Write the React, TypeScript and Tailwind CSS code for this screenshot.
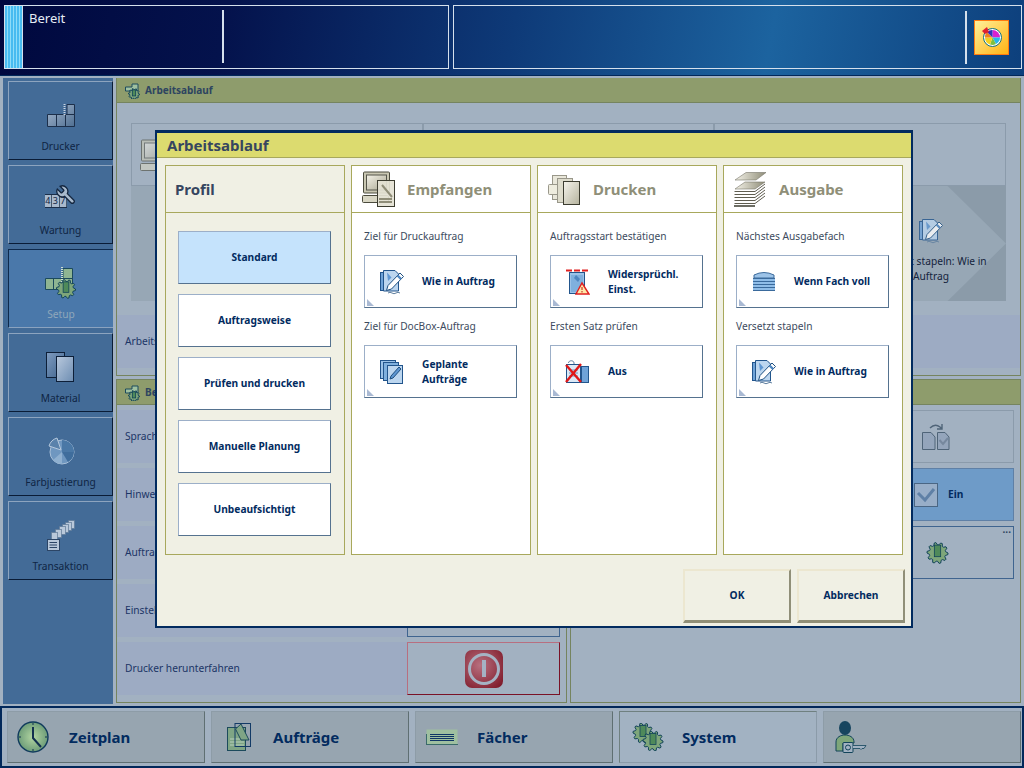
import React from 'react';

// regular text is set in Noto Sans, bold text in DejaVu Sans Bold (closest to the wide bold in the picture)
const bold = "font-['DejaVu_Sans',sans-serif] font-bold";

// gear outline, teeth around a centre
const gearPath = (cx: number, cy: number, r: number, teeth = 10) => {
  const pts: string[] = [];
  for (let i = 0; i < teeth * 4; i++) {
    const a = (i / (teeth * 4)) * Math.PI * 2;
    const rr = i % 4 < 2 ? r : r * 0.78;
    pts.push(`${(cx + Math.cos(a) * rr).toFixed(1)},${(cy + Math.sin(a) * rr).toFixed(1)}`);
  }
  return `M${pts.join('L')}Z`;
};

const Gear = ({ cx, cy, r }: { cx: number; cy: number; r: number }) => (
  <g>
    <path d={gearPath(cx, cy, r)} fill="#7ea67a" stroke="#12445a" strokeWidth="1" />
    <rect x={cx - r * 0.3} y={cy - r * 0.75} width={r * 0.6} height={r * 1.1} fill="#4f8a5a" stroke="#12445a" strokeWidth="0.8" />
  </g>
);

const DruckerIcon = () => (
  <svg width="28" height="23" viewBox="0 0 28 23">
    <defs>
      <linearGradient id="dr" x1="0" y1="0" x2="1" y2="1"><stop offset="0" stopColor="#a9bad0" /><stop offset="1" stopColor="#4f6f92" /></linearGradient>
    </defs>
    <path d="M0.5 10.5H27.5V22.5H0.5ZM20 0.5H27.5V10.5H20Z" fill="url(#dr)" stroke="#1c2f4a" />
    <path d="M9.5 11V22M18.5 11V22M20 10.5H27" stroke="#1c2f4a" />
    <path d="M17.5 0V11" stroke="#c8d4e2" strokeWidth="2" strokeDasharray="1 1" />
  </svg>
);

const WartungIcon = () => (
  <div className="relative w-[32px] h-[24px] -mt-[6px]">
    <div className="absolute left-0 bottom-0 flex border-y border-[#1c2f4a] bg-[#a9b9cc]">
      {['4', '3', '7'].map(n => (
        <span key={n} className="w-[7.5px] h-[12px] text-[9px] leading-[12px] text-center text-[#0f2544] border-r border-[#44586f]">{n}</span>
      ))}
    </div>
    <svg className="absolute left-[10px] top-0" width="22" height="22" viewBox="0 0 24 24">
      <path
        transform="translate(24 0) scale(-1 1)"
        d="M14.7 6.3a1 1 0 0 0 0 1.4l1.6 1.6a1 1 0 0 0 1.4 0l3.77-3.77a6 6 0 0 1-7.94 7.94l-6.91 6.91a2.12 2.12 0 0 1-3-3l6.91-6.91a6 6 0 0 1 7.94-7.94l-3.76 3.76z"
        fill="#a9bacd"
        stroke="#14263f"
        strokeWidth="1.4"
      />
    </svg>
  </div>
);

const SetupIcon = () => (
  <svg width="32" height="32" viewBox="0 0 32 32">
    <path d="M0.5 11.5H27.5V22.5H0.5ZM18 1.5H27.5V11.5H18Z" fill="#8fb592" stroke="#1c4a5c" />
    <path d="M8.5 12V22M17 12V22" stroke="#1c4a5c" />
    <path d="M17 0V18" stroke="#cfe0d0" strokeWidth="2" strokeDasharray="1 1" />
    <Gear cx={21} cy={22} r={9.5} />
  </svg>
);

const MaterialIcon = () => (
  <svg width="29" height="30" viewBox="0 0 29 30">
    <defs>
      <linearGradient id="mt1" x1="0" y1="0" x2="1" y2="1"><stop offset="0" stopColor="#7f9cc0" /><stop offset="1" stopColor="#3e628c" /></linearGradient>
      <linearGradient id="mt2" x1="0" y1="0" x2="1" y2="1"><stop offset="0" stopColor="#b9c9dd" /><stop offset="1" stopColor="#6d8db2" /></linearGradient>
    </defs>
    <rect x="0.5" y="0.5" width="18" height="25" fill="url(#mt1)" stroke="#0d1f38" />
    <rect x="10.5" y="4.5" width="17" height="25" fill="url(#mt2)" stroke="#0d1f38" />
  </svg>
);

const FarbIcon = () => (
  <svg width="28" height="28" viewBox="0 0 28 28">
    <circle cx="15" cy="15" r="12" fill="#6f97c0" stroke="#a9c0d8" />
    <path d="M15 15L27 15A12 12 0 0 1 21 25Z" fill="#3f6d9c" />
    <path d="M15 15L15 3A12 12 0 0 1 27 15Z" fill="#4a78a6" />
    <path d="M15 15L6 23A12 12 0 0 0 15 27Z" fill="#8fb0d0" />
    <path d="M14 13L2 9A12 12 0 0 1 10 1Z" fill="#5a82ab" stroke="#b5c8dc" />
  </svg>
);

const TransaktionIcon = () => (
  <svg width="28" height="31" viewBox="0 0 28 31">
    {[[21, 0], [18, 2], [15, 4], [12, 6], [8, 9], [4, 12]].map(([x, y]) => (
      <rect key={x} x={x + 0.5} y={y + 0.5} width="6" height="8" fill="#b9c8da" stroke="#5e7896" strokeWidth="0.7" />
    ))}
    <rect x="0.5" y="19.5" width="12" height="11" fill="#b9c8da" stroke="#2c4566" />
    <path d="M2.5 22.5H10M2.5 25H10M2.5 27.5H10" stroke="#2c4566" />
  </svg>
);

const ClockIcon = () => (
  <svg width="34" height="34" viewBox="0 0 34 34">
    <defs>
      <radialGradient id="clk"><stop offset="0" stopColor="#b3d6a2" /><stop offset="1" stopColor="#6d9c78" /></radialGradient>
    </defs>
    <circle cx="17" cy="17" r="15" fill="url(#clk)" stroke="#0f3a5c" strokeWidth="1.4" />
    <path d="M17 7L17 18L25 27" fill="none" stroke="#12304f" strokeWidth="2" />
    <path d="M17 3V5M17 29V31M3 17H5M29 17H31" stroke="#12304f" />
  </svg>
);

const AuftraegeIcon = () => (
  <svg width="24" height="28" viewBox="0 0 24 28">
    <rect x="0.5" y="4.5" width="18" height="23" fill="#7fa585" stroke="#1c4a5c" />
    <path d="M3 16H17M3 19H17M3 22H17" stroke="#b9d0bc" />
    <rect x="8" y="0.5" width="15.5" height="23" fill="none" stroke="#123a66" />
    <path d="M8.5 6L14 1L22 17H14Z" fill="#7fa585" stroke="#1c4a5c" />
  </svg>
);

const FaecherIcon = () => (
  <svg width="32" height="16" viewBox="0 0 32 16">
    <rect x="0.5" y="0.5" width="31" height="15" fill="#9fc0a0" />
    <path d="M0 15.5H32M0.5 5V15" stroke="#3a6a6a" />
    <path d="M4 5.5H28M4 7.5H28M4 9.5H28M4 11.5H28" stroke="#0f3566" />
  </svg>
);

const GearsIcon = () => (
  <svg width="33" height="28" viewBox="0 0 33 28">
    <Gear cx={11} cy={10} r={10} />
    <Gear cx={21} cy={18} r={10} />
  </svg>
);

const UserKeyIcon = () => (
  <svg width="32" height="33" viewBox="0 0 32 33">
    <ellipse cx="10" cy="7" rx="6" ry="7" fill="#17455f" />
    <path d="M1 30V21C1 16 6 14 10 14C14 14 19 16 19 21V22H8V30Z" fill="#7ea67a" stroke="#12445a" />
    <rect x="8" y="21.5" width="10" height="10" rx="1" fill="#a2b2c2" stroke="#12445a" />
    <circle cx="13" cy="26.5" r="2.5" fill="none" stroke="#12445a" />
    <path d="M18 24.5H31L29 27.5H27L26 28.5L25 27.5H18" fill="#a2b2c2" stroke="#12445a" strokeWidth="0.8" />
  </svg>
);

const DocPencil = () => (
  <svg width="24" height="26" viewBox="0 0 24 26">
    <rect x="0.5" y="3.5" width="14" height="18" fill="#6fa3d8" stroke="#22558c" />
    <path d="M3.5 1.5H15L18.5 5V22H3.5Z" fill="#bcd6ef" stroke="#22558c" />
    <path d="M7 3.5L11.5 8.5L8 12Z" fill="#5f97d2" />
    <path d="M20 4L23.5 7.5L11.5 20L6.5 21.5L8 16.5Z" fill="#fff" stroke="#1d4f80" />
    <path d="M17.5 6.5L21 10" stroke="#4f86c0" strokeWidth="2.4" />
    <path d="M8 24Q10 22.5 12 24T16 24T20 24" fill="none" stroke="#5f7f9f" />
  </svg>
);

const DocsPencil = () => (
  <svg width="24" height="24" viewBox="0 0 24 24">
    <rect x="0.5" y="0.5" width="15" height="18" fill="#9cc3e8" stroke="#22558c" />
    <rect x="3.5" y="2.5" width="15" height="18" fill="#7fb0de" stroke="#22558c" />
    <rect x="7.5" y="5.5" width="15" height="18" fill="#bcd6ef" stroke="#22558c" />
    <path d="M19 7L21 9L13 18L10 19L11 16Z" fill="#5f97d2" stroke="#1d4f80" />
  </svg>
);

const WarnDoc = () => (
  <svg width="24" height="26" viewBox="0 0 24 26">
    <path d="M0 1.5H22" stroke="#e02020" strokeWidth="2" strokeDasharray="6 2" />
    <rect x="3.5" y="3.5" width="15" height="21" fill="#9cc3e8" stroke="#22558c" />
    <path d="M5 6H17V13L10 23H5Z" fill="#7fb0de" />
    <path d="M10 6L14 10L12 13L8 9Z" fill="#4f86c0" />
    <path d="M16 14L23 25H10Z" fill="#ffe9a8" stroke="#e02020" strokeWidth="1.4" />
    <path d="M16 18V21M16 22V23.5" stroke="#c01010" />
  </svg>
);

const NoProof = () => (
  <svg width="25" height="24" viewBox="0 0 25 24">
    <path d="M3.5 3C3.5 0 9 0 9 3V5" fill="none" stroke="#5f7f9f" />
    <rect x="1.5" y="4.5" width="14" height="18" fill="#dce9f6" stroke="#22558c" />
    <rect x="16.5" y="6.5" width="7" height="16" fill="#6fa3d8" stroke="#22558c" />
    <path d="M4 10H13M4 13H13M4 16H13" stroke="#6f97c0" />
    <path d="M1 22L16 4M1 5L16 22" stroke="#e01818" strokeWidth="2.4" />
  </svg>
);

const TrayIcon = () => (
  <svg width="24" height="21" viewBox="0 0 24 21">
    <path d="M2 4Q12 -1 22 4V7H2Z" fill="#9cc3e8" stroke="#3a6a9c" />
    <path d="M1 7.5H23M1 10.5H23M1 13.5H23M1 16.5H23M1 19.5H23" stroke="#3a6a9c" />
    <path d="M1 9H23M1 12H23M1 15H23M1 18H23" stroke="#8fbde8" strokeWidth="2" />
  </svg>
);

const EmpfangenIcon = () => (
  <svg width="34" height="37" viewBox="0 0 34 37">
    <defs>
      <linearGradient id="emp" x1="0" y1="0" x2="1" y2="1"><stop offset="0" stopColor="#f4f2e8" /><stop offset="1" stopColor="#a8a690" /></linearGradient>
    </defs>
    <rect x="1.5" y="1" width="26" height="21" rx="1" fill="#c9c7b2" stroke="#4a4a3c" />
    <rect x="4.5" y="4" width="20" height="15" fill="url(#emp)" stroke="#55554a" />
    <rect x="0.5" y="24.5" width="26" height="7" rx="1" fill="#d8d6c4" stroke="#4a4a3c" />
    <rect x="15.5" y="9.5" width="17" height="26" fill="#e4e2d4" fillOpacity="0.92" stroke="#3c3c30" />
    <path d="M20 14L30 26M17 28H30M17 31H30" stroke="#8f8d78" strokeWidth="2" />
  </svg>
);

const DruckenIcon = () => (
  <svg width="32" height="31" viewBox="0 0 32 31">
    <defs>
      <linearGradient id="dru" x1="0" y1="0" x2="1" y2="1"><stop offset="0" stopColor="#f6f4ec" /><stop offset="1" stopColor="#b5b39e" /></linearGradient>
    </defs>
    <rect x="4.5" y="1.5" width="14" height="24" fill="#e9e7da" stroke="#99978a" />
    <rect x="0.5" y="10.5" width="17" height="10" rx="1" fill="#eeecde" stroke="#99978a" />
    <rect x="9.5" y="4.5" width="15" height="24" fill="#dedccc" stroke="#99978a" />
    <rect x="15.5" y="7.5" width="16" height="23" fill="url(#dru)" stroke="#3c3c30" />
  </svg>
);

const AusgabeIcon = () => (
  <svg width="32" height="35" viewBox="0 0 32 35">
    <defs>
      <linearGradient id="aus" x1="0" y1="0" x2="1" y2="0"><stop offset="0" stopColor="#f4f2e8" /><stop offset="1" stopColor="#8f8d78" /></linearGradient>
    </defs>
    <path d="M1 8L12 0.5H32L22 8Z" fill="url(#aus)" stroke="#77756a" strokeWidth="0.6" />
    <path d="M1 17L11 10H31L21 17Z" fill="url(#aus)" stroke="#77756a" strokeWidth="0.6" />
    <path d="M0.5 19.5H21L31 12M0.5 22.5H21L31 15M0.5 25.5H21L31 18M0.5 28.5H21L31 21M0.5 31.5H21L31 24" fill="none" stroke="#5f5d50" />
    <path d="M0 34H21" stroke="#3c3c30" strokeWidth="1.5" />
  </svg>
);

const TwoDocsIcon = () => (
  <svg width="30" height="27" viewBox="0 0 30 27">
    <path d="M8 5Q13 0 18 4L20 6M20 1V6H15" fill="none" stroke="#4f6478" strokeWidth="1.4" />
    <path d="M0.5 9.5H9L13 14V26.5H0.5Z" fill="#94a5bb" stroke="#4f6478" />
    <path d="M15.5 9.5H23L27 14V26.5H15.5Z" fill="#94a5bb" stroke="#4f6478" />
    <path d="M17.5 17L21 21L26 15" fill="none" stroke="#76889e" strokeWidth="2" />
  </svg>
);

const CheckBox = () => (
  <svg width="24" height="24" viewBox="0 0 24 24">
    <rect x="0.5" y="0.5" width="23" height="23" fill="#98aec8" stroke="#4a6684" />
    <path d="M4 10L11 17L20 6" fill="none" stroke="#5f80a6" strokeWidth="3" />
  </svg>
);

const PowerIcon = () => (
  <svg width="38" height="38" viewBox="0 0 38 38">
    <defs>
      <radialGradient id="pw" cx="0.4" cy="0.4" r="0.8"><stop offset="0" stopColor="#b8707f" /><stop offset="1" stopColor="#7c1626" /></radialGradient>
    </defs>
    <rect width="38" height="38" rx="7" fill="url(#pw)" />
    <circle cx="19" cy="19" r="14.5" fill="none" stroke="#a5b3c4" strokeWidth="3" />
    <rect x="17" y="10" width="4" height="17" fill="#a5b3c4" />
  </svg>
);

const ColorWheelIcon = () => (
  <svg width="20" height="20" viewBox="0 0 20 20">
    <circle cx="10.5" cy="10.5" r="9" fill="#fff" stroke="#0f7080" />
    <path d="M10.5 10.5V3A7.5 7.5 0 0 1 18 10.5Z" fill="#d81fd0" />
    <path d="M10.5 10.5H18A7.5 7.5 0 0 1 14 17Z" fill="#27b7e8" />
    <path d="M10.5 10.5L14 17A7.5 7.5 0 0 1 8 17.5Z" fill="#7fbf40" />
    <path d="M10.5 10.5L8 17.5A7.5 7.5 0 0 1 3 10.5Z" fill="#f2d020" />
    <path d="M10.5 10.5H3A7.5 7.5 0 0 1 5 5Z" fill="#f08020" />
    <path d="M10.5 10.5L5 5A7.5 7.5 0 0 1 10.5 3Z" fill="#3030c0" />
    <path d="M0 4L5 0L7 5L3 7Z" fill="#e02030" />
  </svg>
);

const sideItems = [
  { label: 'Drucker', icon: <DruckerIcon /> },
  { label: 'Wartung', icon: <WartungIcon /> },
  { label: 'Setup', icon: <SetupIcon />, active: true },
  { label: 'Material', icon: <MaterialIcon /> },
  { label: 'Farbjustierung', icon: <FarbIcon /> },
  { label: 'Transaktion', icon: <TransaktionIcon /> },
];

const tabs = [
  { id: 'zeitplan', label: 'Zeitplan', icon: <ClockIcon />, pad: 'pl-[8px]', w: 'w-[53px]' },
  { id: 'auftraege', label: 'Aufträge', icon: <AuftraegeIcon />, pad: 'pl-[15px]', w: 'w-[46px]' },
  { id: 'faecher', label: 'Fächer', icon: <FaecherIcon />, pad: 'pl-[10px]', w: 'w-[51px]' },
  { id: 'system', label: 'System', icon: <GearsIcon />, pad: 'pl-[12px]', w: 'w-[50px]', active: true },
  { id: 'user', label: '', icon: <UserKeyIcon />, pad: 'pl-[11px]', w: 'w-[50px]' },
];

const settingRows = ['Sprache', 'Hinweistöne', 'Auftragsverwaltung', 'Einstellungen', 'Drucker herunterfahren'];

const columns = [
  {
    title: 'Empfangen',
    icon: <EmpfangenIcon />,
    items: [
      { label: 'Ziel für Druckauftrag', value: ['Wie in Auftrag'], icon: <DocPencil /> },
      { label: 'Ziel für DocBox-Auftrag', value: ['Geplante', 'Aufträge'], icon: <DocsPencil /> },
    ],
  },
  {
    title: 'Drucken',
    icon: <DruckenIcon />,
    items: [
      { label: 'Auftragsstart bestätigen', value: ['Widersprüchl.', 'Einst.'], icon: <WarnDoc /> },
      { label: 'Ersten Satz prüfen', value: ['Aus'], icon: <NoProof /> },
    ],
  },
  {
    title: 'Ausgabe',
    icon: <AusgabeIcon />,
    items: [
      { label: 'Nächstes Ausgabefach', value: ['Wenn Fach voll'], icon: <TrayIcon /> },
      { label: 'Versetzt stapeln', value: ['Wie in Auftrag'], icon: <DocPencil /> },
    ],
  },
];

const profiles = ['Standard', 'Auftragsweise', 'Prüfen und drucken', 'Manuelle Planung', 'Unbeaufsichtigt'];

const PanelTitle = ({ text }: { text: string }) => (
  <div className="h-[25px] shrink-0 bg-[#8e9c6c] border-b border-[#75845f] flex items-center gap-[2px] pl-[8px] pt-[1px]">
    <svg width="18" height="17" viewBox="0 0 18 17">
      <path d="M0.5 5H7V2H13V9H0.5Z" fill="#9fc0a0" stroke="#1c4a5c" />
      <Gear cx={9} cy={12} r={5.5} />
    </svg>
    <span className={`text-[10px] text-[#2d4460] ${bold}`}>{text}</span>
  </div>
);

const OptionButton = ({ value, icon }: { value: string[]; icon: React.ReactNode }) => (
  <div className="relative w-[153px] h-[53px] bg-white border border-t-[#9cafc8] border-l-[#9cafc8] border-r-[#55728f] border-b-[#55728f] flex items-center">
    <span className="w-[53px] mr-[4px] flex justify-center">{icon}</span>
    <span className={`text-[10.2px] leading-[15px] text-[#022b5f] ${bold}`}>
      {value.map(v => <span key={v} className="block whitespace-nowrap">{v}</span>)}
    </span>
    <span className="absolute left-[2px] bottom-[1px] w-[7px] h-[7px] bg-[#a9b9d3] [clip-path:polygon(0_0,100%_100%,0_100%)]" />
  </div>
);

export default function App() {
  return (
    <div className="relative w-[1024px] h-[768px] overflow-hidden flex flex-col bg-[#a2b1c1] font-['Noto_Sans',sans-serif]">
      {/* status bar */}
      <header className="h-[76px] shrink-0 flex gap-[4px] pl-[4px] pr-[2px] pt-[5px] border-b border-[#02285a] bg-[linear-gradient(100deg,#00083e_0%,#04124c_22%,#0e3a78_50%,#1c639f_75%,#0d3f7c_100%)]">
        <div className="w-[445px] h-[64px] border border-[#d5e0ec] flex">
          <div className="w-[18px] bg-[repeating-linear-gradient(90deg,#48bbf0_0,#48bbf0_2px,#8fdcf8_2px,#8fdcf8_3px)] border-r border-[#d5e0ec]" />
          <div className="w-[201px] h-[53px] mt-[4px] pl-[6px] pt-[1px] text-[13px] leading-[15px] text-[#e6edf6] border-r-2 border-[#d5e0ec]">Bereit</div>
        </div>
        <div className="flex-1 h-[64px] border border-[#d5e0ec] flex justify-end items-center">
          <div className="w-[2px] h-[53px] bg-[#d5e0ec]" />
          <div className="ml-[7px] mr-[12px] w-[35px] h-[35px] border border-[#ff7a10] bg-[linear-gradient(135deg,#ffef9a,#ffb414)] flex items-center justify-center">
            <ColorWheelIcon />
          </div>
        </div>
      </header>

      {/* main area */}
      <div className="h-[630px] shrink-0 flex pt-[2px] pl-[3px]">
        <aside className="w-[110px] h-[626px] shrink-0 bg-[#436b97] flex flex-col gap-[5px] pt-[3px] pl-[5px]">
          {sideItems.map(it => (
            <div
              key={it.label}
              className={`w-[105px] h-[79px] shrink-0 flex flex-col items-center border ${
                it.active
                  ? 'bg-[#4a78aa] border-t-[#0f2a4c] border-l-[#0f2a4c] border-b-[#8aa2bf] border-r-0 text-[#8fa7ba]'
                  : 'border-t-[#8da4bf] border-l-[#8da4bf] border-b-[#0a1c36] border-r-[#0a1c36] text-[#0f2544]'
              }`}
            >
              <div className="h-[48px] mt-[9px] w-full flex items-center justify-center">{it.icon}</div>
              <span className="text-[10.2px] leading-[14px]">{it.label}</span>
            </div>
          ))}
        </aside>

        <div className="w-[905px] ml-[3px] flex flex-col gap-[3px]">
          {/* workflow panel */}
          <section className="h-[298px] border border-[#75845f] border-t-0 flex flex-col">
            <PanelTitle text="Arbeitsablauf" />
            <div className="mx-[14px] mt-[20px] h-[178px] grid grid-cols-3">
              {[0, 1, 2].map(i => (
                <div key={i} className="flex flex-col">
                  <div className="h-[63px] border border-[#8b9bab] pl-[8px] pt-[15px]">
                    {i === 0 && <div className="opacity-60"><EmpfangenIcon /></div>}
                  </div>
                  <div className="relative flex-1 bg-[#8b9ba9] flex justify-end">
                    <div className="absolute inset-0 bg-[#97a7b5] [clip-path:polygon(0_0,80%_0,100%_50%,80%_100%,0_100%)]" />
                    {i === 2 && (
                      <div className="relative w-[120px] mr-[15px] pt-[32px] flex flex-col items-center text-[10.2px] leading-[15px] text-center text-[#14233c]">
                        <div className="opacity-80"><DocPencil /></div>
                        <span className="mt-[10px]">Versetzt stapeln: Wie in Auftrag</span>
                      </div>
                    )}
                  </div>
                </div>
              ))}
            </div>
            <div className="mt-[14px] h-[53px] bg-[#9dabc3] flex items-center pl-[8px] text-[10.2px] text-[#1c3566]">Arbeitsablauf</div>
          </section>

          <div className="flex gap-[3px] h-[324px]">
            {/* settings panel */}
            <section className="w-[451px] border border-[#75845f] flex flex-col">
              <PanelTitle text="Bedienung" />
              <div className="flex flex-col gap-[5px] pt-[5px]">
                {settingRows.map((r, i) => (
                  <div key={r} className="h-[53px] flex">
                    <div className="flex-1 bg-[#9dabc3] flex items-center pl-[8px] text-[10.2px] text-[#1c3566]">{r}</div>
                    <div className={`w-[153px] mr-[6px] flex items-center justify-center border ${i === 4 ? 'border-t-[#b86f80] border-l-[#b86f80] border-r-[#7a1226] border-b-[#7a1226]' : 'border-[#3f648f]'}`}>
                      {i === 4 && <PowerIcon />}
                    </div>
                  </div>
                ))}
              </div>
            </section>

            {/* output panel */}
            <section className="w-[451px] border border-[#75845f] flex flex-col">
              <PanelTitle text="Ausgabe" />
              <div className="flex flex-col gap-[5px] pt-[5px] items-end pr-[6px]">
                <div className="w-[153px] h-[53px] border border-[#8b9bab] flex items-center pl-[60px]"><TwoDocsIcon /></div>
                <div className="w-[153px] h-[53px] border border-[#5f80a6] bg-[#6e9bc8] flex items-center pl-[52px] gap-[10px]">
                  <CheckBox />
                  <span className={`text-[10.2px] text-[#022b5f] ${bold}`}>Ein</span>
                </div>
                <div className="relative w-[153px] h-[53px] border border-[#3f648f] flex items-center pl-[64px]">
                  <svg width="23" height="22" viewBox="0 0 23 22"><Gear cx={11.5} cy={11} r={10.5} /></svg>
                  <span className={`absolute right-[2px] top-[-3px] text-[10px] leading-[10px] text-[#2d4460] ${bold}`}>...</span>
                </div>
              </div>
            </section>
          </div>
        </div>
      </div>

      {/* bottom navigation */}
      <nav className="h-[62px] shrink-0 bg-[#a2b1c1] border-2 border-[#02285a] flex gap-[6px] pl-[5px] pt-[3px]">
        {tabs.map(t => (
          <div
            key={t.id}
            className={`w-[198px] h-[52px] flex items-center border ${t.pad} ${
              t.active
                ? 'bg-[#a2b2c2] border-[#8b9ba9] border-t-[#6f8080] border-l-[#6f8080]'
                : 'bg-[#97a5b0] border-t-[#8d9ca7] border-l-[#8d9ca7] border-r-[#5f6f72] border-b-[#5f6f72]'
            }`}
          >
            <span className={`${t.w} shrink-0 flex`}>{t.icon}</span>
            <span className={`text-[15px] text-[#022b5f] ${bold}`}>{t.label}</span>
          </div>
        ))}
      </nav>

      {/* dialog */}
      <div className="absolute left-[155px] top-[130px] w-[758px] h-[498px] border-2 border-t-[3px] border-[#022b5f] bg-[#f0f0e4] flex flex-col">
        <div className={`h-[25px] shrink-0 bg-[#dcdb6f] border-b border-[#a8a85c] pl-[10px] flex items-center text-[15px] text-[#36465f] ${bold}`}>Arbeitsablauf</div>
        <div className="flex gap-[6px] pl-[8px] pt-[7px]">
          <div className="w-[180px] h-[390px] border border-[#a8a85c] flex flex-col">
            <div className={`h-[47px] shrink-0 border-b border-[#a8a85c] pl-[9px] flex items-center text-[15px] text-[#36465f] ${bold}`}>Profil</div>
            <div className="flex flex-col gap-[10px] pl-[12px] pt-[18px]">
              {profiles.map((p, i) => (
                <div key={p} className={`w-[153px] h-[53px] flex items-center justify-center border border-t-[#9cafc8] border-l-[#9cafc8] border-r-[#55728f] border-b-[#55728f] text-[10.2px] text-[#022b5f] ${bold} ${i === 0 ? 'bg-[#c5e3fc]' : 'bg-white'}`}>{p}</div>
              ))}
            </div>
          </div>
          {columns.map(c => (
            <div key={c.title} className="w-[180px] h-[390px] bg-white border border-[#a8a85c] flex flex-col">
              <div className="h-[47px] shrink-0 border-b border-[#a8a85c] pl-[10px] flex items-center">
                <span className="w-[45px] shrink-0 flex">{c.icon}</span>
                <span className={`text-[15px] text-[#8f8f78] ${bold}`}>{c.title}</span>
              </div>
              <div className="flex flex-col pl-[12px] pt-[16px]">
                {c.items.map(it => (
                  <div key={it.label} className="h-[90px] flex flex-col">
                    <span className="h-[26px] text-[10.2px] leading-[14px] text-[#3d4b5e]">{it.label}</span>
                    <OptionButton value={it.value} icon={it.icon} />
                  </div>
                ))}
              </div>
            </div>
          ))}
        </div>
        <div className="flex justify-end gap-[6px] pr-[6px] mt-[14px]">
          {['OK', 'Abbrechen'].map(b => (
            <div key={b} className={`w-[108px] h-[54px] flex items-center justify-center border-2 border-b-[3px] border-t-[#ece7d0] border-l-[#ece7d0] border-r-[#908f78] border-b-[#908f78] text-[10.2px] text-[#022b5f] ${bold}`}>{b}</div>
          ))}
        </div>
      </div>
    </div>
  );
}
